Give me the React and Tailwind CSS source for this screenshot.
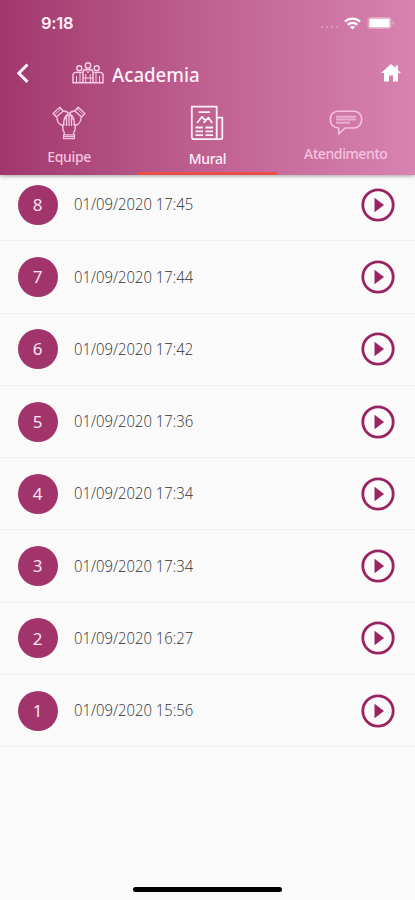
const posts = [
  ['8', '01/09/2020 17:45'],
  ['7', '01/09/2020 17:44'],
  ['6', '01/09/2020 17:42'],
  ['5', '01/09/2020 17:36'],
  ['4', '01/09/2020 17:34'],
  ['3', '01/09/2020 17:34'],
  ['2', '01/09/2020 16:27'],
  ['1', '01/09/2020 15:56'],
];

function StatusBar() {
  return (
    <div className="flex h-[46px] items-center pl-[41px] pr-[20px] text-white">
      <span className="pt-px font-['Inter',sans-serif] text-[16.5px] font-semibold leading-none tracking-[-0.3px] text-[#fff0f8]">9:18</span>
      <div className="ml-auto flex items-center">
        <div className="mr-[6px] mt-[8px] flex gap-[3px]">
          {[0, 1, 2, 3].map((dot) => (
            <span key={dot} className="size-[2px] rounded-full bg-white/35" />
          ))}
        </div>
        <svg width="17" height="13" viewBox="0 0 17 13" fill="none" stroke="currentColor" strokeWidth="2.4">
          <path d="M1 4.6C5 .6 12 .6 16 4.6" />
          <path d="M3.8 7.9C6.500 5.300 10.500 5.300 13.200 7.900" />
          <path d="M8.500 12.600 5.900 10C7.300 8.800 9.700 8.800 11.100 10Z" fill="currentColor" stroke="none" />
        </svg>
        <svg className="ml-[6px]" width="28" height="14" viewBox="0 0 28 14">
          <rect x=".5" y="1" width="24" height="12" rx="3" fill="#fff" fillOpacity=".3" />
          <rect x="2.5" y="2.8" width="20" height="8.4" rx=".8" fill="#fff" />
          <path d="M25.500 4.500v5c2-.8 2-4.200 0-5Z" fill="#fff" fillOpacity=".35" />
        </svg>
      </div>
    </div>
  );
}

function PeopleIcon() {
  return (
    <svg width="32" height="22" viewBox="0 0 32 22" fill="none" stroke="#fbd0e7" strokeWidth="1.4">
      <circle cx="16" cy="3.4" r="2.7" />
      <circle cx="7.3" cy="6.2" r="2.5" />
      <circle cx="24.7" cy="6.2" r="2.5" />
      <path d="M11 20.8V10.500c0-2 1.200-3 3-3h4c1.800 0 3 1 3 3v10.300" />
      <path d="M10.500 10.400H4c-1.800 0-3 1.200-3 3v7.400h30v-7.400c0-1.800-1.200-3-3-3h-6.500" />
      <path d="M4.500 14v6.500M8 11v9.500M27.500 14v6.500M24 11v9.500M13.700 12v8.500M18.300 12v8.500M14 8l2 3 2-3M11 16h10" strokeWidth="1" />
    </svg>
  );
}

function HandsIcon() {
  return (
    <svg width="34" height="34" viewBox="0 0 34 34" fill="none" stroke="currentColor" strokeWidth="1.4" strokeLinejoin="round">
      <path d="M1 7.500 7.800 1.300l3.400 3.600-6.800 6.200ZM33 7.500l-6.800-6.200-3.400 3.600 6.800 6.200Z" />
      <path d="M2.800 8.700 8.800 3.200M31.200 8.700l-6-5.500" strokeWidth=".9" />
      <path d="M4.800 11.300c.3 3 1.200 5.800 3.700 7.300 1.500.9 3.300.5 4.400-.4M11.300 5c2.200 0 4.300.8 5.700 2.900M17 7.900c-2.600.6-4.200 2.900-4.800 5.500" />
      <path d="M29.200 11.300c-.3 3-1.200 5.800-3.700 7.300-1.500.9-3.300.5-4.400-.4M22.700 5c-2.200 0-4.300.8-5.700 2.900M17 7.900c2.600.6 4.200 2.900 4.800 5.500" />
      <path d="M12.200 29v-2.600c-1.700-2.700-1.700-6.200-.6-9l.6-4c.6-1.300 2.100-1.100 2.300.2v-3.200c.3-1.400 2.200-1.400 2.500 0 .3-1.400 2.200-1.400 2.500 0v3.200c.2-1.300 1.700-1.500 2.300-.2l.6 4c1.100 2.800 1.100 6.300-.6 9V29" />
      <path d="M14.500 13.500V20M17 10.500V20M19.500 13.500V20" strokeWidth="1.300" />
      <path d="M11.500 28.800h11v3.800h-11ZM12 30.700h10" strokeWidth="1.200" />
    </svg>
  );
}

function NewsIcon() {
  return (
    <svg width="34" height="36" viewBox="0 0 34 36" fill="none" stroke="currentColor" strokeWidth="1.8" strokeLinejoin="round">
      <path d="M27.500 34.200H3.800A2 2 0 0 1 1.800 32.200V1.600h24.900v32.600M26.700 12.600h5.600v20c0 1-.6 1.600-1.600 1.600h-3.200" />
      <path d="M8.500 7.200h11.500M7 18l5-6.200 3.600 3.800 2.800-3 3.800 5.400M15.600 15.600l-2 2.300" />
      <path d="M5.500 22.500h7.500M5.500 26.300h7.500M5.500 30.200h7.500M15.500 22.500H23M15.500 26.300H23M15.500 30.200H23" />
    </svg>
  );
}

function ChatIcon() {
  return (
    <svg width="34" height="26" viewBox="0 0 34 26" fill="none" stroke="currentColor" strokeWidth="1.6" strokeLinejoin="round">
      <path d="M9 1.200h16c4.500 0 7.700 3.700 7.700 8.300S29.500 18 25 18h-9l-6.300 6v-6C4.500 18 1.300 14.300 1.300 9.500S4.500 1.200 9 1.200Z" />
      <path d="M7 6.700h20M7 9.500h20M7 12.700h14" strokeWidth="2" strokeOpacity=".75" />
    </svg>
  );
}

function Header() {
  return (
    <header className="relative z-10 h-[175px] bg-linear-to-r from-[#a1376d] via-[#bf6191] to-[#d883b0] font-['Noto_Sans',sans-serif] shadow-[0_1px_4px_rgba(0,0,0,0.35)]">
      <StatusBar />
      <div className="flex h-[54px] items-center pl-[15.5px] pr-[14px]">
        <svg width="13" height="21" viewBox="0 0 13 21" fill="none" stroke="#fff0f8" strokeWidth="3">
          <path d="m11.500 1.500-8.700 8.700 8.700 8.700" />
        </svg>
        <div className="ml-[43.500px]"><PeopleIcon /></div>
        <h1 className="ml-[8px] w-[100px] origin-left scale-x-[0.91] pt-[3px] text-[20.500px] font-medium leading-none text-[#fff0f8]">Academia</h1>
        <svg className="ml-auto" width="20" height="18" viewBox="0 0 20 18" fill="#fff">
          <path d="M10 0 0 9h3v8.500h5v-6h4v6h5V9h3L17 6.200V1.500h-2.500V4Z" />
        </svg>
      </div>
      <nav className="grid h-[75px] grid-cols-3">
        <div className="flex flex-col items-center pt-[6px] text-[#f4c3dd]">
          <HandsIcon />
          <span className="mt-[9px] text-[14px] font-medium leading-[16px] tracking-[-0.35px]">Equipe</span>
        </div>
        <div className="flex flex-col items-center border-b-[3px] border-[#e84f4c] pt-[5px] text-[#fff0f8]">
          <NewsIcon />
          <span className="mt-[10px] text-[14px] font-medium leading-[16px] tracking-[-0.35px]">Mural</span>
        </div>
        <div className="flex flex-col items-center pt-[10px] text-[#f4c3dd]">
          <ChatIcon />
          <span className="mt-[10px] text-[14px] font-medium leading-[16px] tracking-[-0.4px]">Atendimento</span>
        </div>
      </nav>
    </header>
  );
}

function PostRow({ number, date }) {
  return (
    <li className="flex h-[72.300px] items-center border-b border-[#f0f0f0] pl-[17.500px] pr-[20px]">
      <span className="flex size-[40px] shrink-0 items-center justify-center rounded-full bg-[#a1346b] font-['Noto_Sans',sans-serif] text-[17px] text-[#fbe5f0]">{number}</span>
      <span className="ml-[16px] origin-left scale-x-[0.9] whitespace-nowrap font-['Open_Sans',sans-serif] text-[16.500px] font-light text-[#303030]">{date}</span>
      <svg className="ml-auto shrink-0" width="34" height="34" viewBox="0 0 34 34">
        <circle cx="17" cy="17" r="15.200" fill="none" stroke="#9a2463" strokeWidth="2.800" />
        <path d="M13.500 9.800v14.400L23 17Z" fill="#9a2463" />
      </svg>
    </li>
  );
}

export default function App() {
  return (
    <div className="flex h-[900px] w-full flex-col overflow-hidden bg-[#fafafa]">
      <Header />
      <ul className="-mt-[6px]">
        {posts.map(([number, date]) => (
          <PostRow key={number} number={number} date={date} />
        ))}
      </ul>
      <div className="mx-auto mb-[8px] mt-auto h-[5px] w-[149px] rounded-full bg-black" />
    </div>
  );
}
